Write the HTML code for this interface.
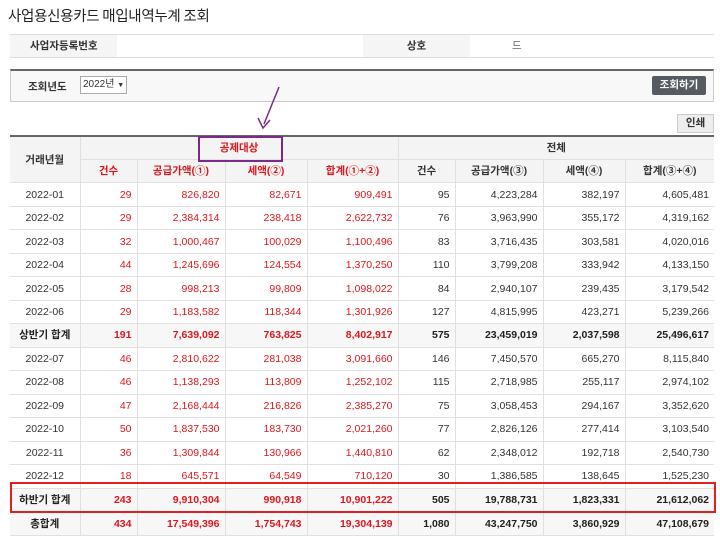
<!DOCTYPE html>
<html><head><meta charset="utf-8"><style>
*{margin:0;padding:0;box-sizing:border-box}
body{width:720px;height:543px;background:#fff;font-family:"Liberation Sans","Noto Sans CJK KR",sans-serif;font-size:10.5px;color:#333;position:relative;overflow:hidden}
.abs{position:absolute}
h1{position:absolute;left:8px;top:5px;font-size:14.5px;font-weight:normal;color:#222;font-family:"Noto Sans CJK KR",sans-serif;letter-spacing:-0.3px}
table{position:absolute;left:10px;top:135px;width:704px;border-collapse:collapse;table-layout:fixed;border-top:2px solid #666}
td,th{border:1px solid #e0e0e0;height:23.47px;line-height:12px;padding:0 5px;text-align:right;font-weight:normal;white-space:nowrap;overflow:hidden}
th{text-align:center;background:#f4f4f4;font-weight:bold;font-size:10.5px;color:#333}
td:first-child{text-align:center;border-left:none}
th:first-child{border-left:none}
tr td:last-child,tr th:last-child{border-right:none}
.r{color:#e0161c}
tr.s td{background:#f7f7f7;font-weight:bold;color:#222}
tr.s td.r{color:#e0161c}
</style></head><body>
<h1>사업용신용카드 매입내역누계 조회</h1>
<div class="abs" style="left:10px;top:34px;width:704px;height:24px;border-top:1px solid #ddd;border-bottom:1px solid #ddd"></div>
<div class="abs" style="left:10px;top:35px;width:107px;height:22px;background:#f5f5f5;font-weight:bold;font-size:10.5px;line-height:22px;padding-left:20px">사업자등록번호</div>
<div class="abs" style="left:363px;top:35px;width:107px;height:22px;background:#f5f5f5;font-weight:bold;line-height:22px;text-align:center">상호</div>
<div class="abs" style="left:477px;top:35px;line-height:22px;color:#666">&nbsp;&nbsp;&nbsp;&nbsp;&nbsp;&nbsp;&nbsp;&nbsp;&nbsp;&nbsp;&nbsp;&nbsp;드</div>
<div class="abs" style="left:10px;top:69px;width:704px;height:33px;background:#f8f8f8;border:1px solid #ccc;border-top:2px solid #666"></div>
<div class="abs" style="left:28px;top:79px;font-weight:bold">조회년도</div>
<div class="abs" style="left:80px;top:76px;width:47px;height:18px;background:#fff;border:1px solid #aaa;font-size:10px;line-height:16px;padding-left:2px;white-space:nowrap;overflow:hidden">2022년 <span style="font-size:7px">▼</span></div>
<div class="abs" style="left:652px;top:76px;width:54px;height:19px;background:#555b61;color:#fff;font-weight:bold;text-align:center;line-height:19px;border-radius:2px">조회하기</div>
<div class="abs" style="left:677px;top:114px;width:37px;height:19px;background:#eee;border:1px solid #ccc;font-weight:bold;text-align:center;line-height:17px">인쇄</div>
<table>
<colgroup><col style="width:70px"><col style="width:57px"><col style="width:88px"><col style="width:82px"><col style="width:91px"><col style="width:57px"><col style="width:88px"><col style="width:82px"><col style="width:89px"></colgroup>
<tr><th rowspan="2">거래년월</th><th colspan="4" class="r" style="color:#e0161c">공제대상</th><th colspan="4">전체</th></tr>
<tr><th class="r" style="color:#e0161c">건수</th><th style="color:#e0161c">공급가액(①)</th><th style="color:#e0161c">세액(②)</th><th style="color:#e0161c">합계(①+②)</th><th>건수</th><th>공급가액(③)</th><th>세액(④)</th><th>합계(③+④)</th></tr>
<tr><td>2022-01</td><td class="r">29</td><td class="r">826,820</td><td class="r">82,671</td><td class="r">909,491</td><td>95</td><td>4,223,284</td><td>382,197</td><td>4,605,481</td></tr>
<tr><td>2022-02</td><td class="r">29</td><td class="r">2,384,314</td><td class="r">238,418</td><td class="r">2,622,732</td><td>76</td><td>3,963,990</td><td>355,172</td><td>4,319,162</td></tr>
<tr><td>2022-03</td><td class="r">32</td><td class="r">1,000,467</td><td class="r">100,029</td><td class="r">1,100,496</td><td>83</td><td>3,716,435</td><td>303,581</td><td>4,020,016</td></tr>
<tr><td>2022-04</td><td class="r">44</td><td class="r">1,245,696</td><td class="r">124,554</td><td class="r">1,370,250</td><td>110</td><td>3,799,208</td><td>333,942</td><td>4,133,150</td></tr>
<tr><td>2022-05</td><td class="r">28</td><td class="r">998,213</td><td class="r">99,809</td><td class="r">1,098,022</td><td>84</td><td>2,940,107</td><td>239,435</td><td>3,179,542</td></tr>
<tr><td>2022-06</td><td class="r">29</td><td class="r">1,183,582</td><td class="r">118,344</td><td class="r">1,301,926</td><td>127</td><td>4,815,995</td><td>423,271</td><td>5,239,266</td></tr>
<tr class="s"><td>상반기 합계</td><td class="r">191</td><td class="r">7,639,092</td><td class="r">763,825</td><td class="r">8,402,917</td><td>575</td><td>23,459,019</td><td>2,037,598</td><td>25,496,617</td></tr>
<tr><td>2022-07</td><td class="r">46</td><td class="r">2,810,622</td><td class="r">281,038</td><td class="r">3,091,660</td><td>146</td><td>7,450,570</td><td>665,270</td><td>8,115,840</td></tr>
<tr><td>2022-08</td><td class="r">46</td><td class="r">1,138,293</td><td class="r">113,809</td><td class="r">1,252,102</td><td>115</td><td>2,718,985</td><td>255,117</td><td>2,974,102</td></tr>
<tr><td>2022-09</td><td class="r">47</td><td class="r">2,168,444</td><td class="r">216,826</td><td class="r">2,385,270</td><td>75</td><td>3,058,453</td><td>294,167</td><td>3,352,620</td></tr>
<tr><td>2022-10</td><td class="r">50</td><td class="r">1,837,530</td><td class="r">183,730</td><td class="r">2,021,260</td><td>77</td><td>2,826,126</td><td>277,414</td><td>3,103,540</td></tr>
<tr><td>2022-11</td><td class="r">36</td><td class="r">1,309,844</td><td class="r">130,966</td><td class="r">1,440,810</td><td>62</td><td>2,348,012</td><td>192,718</td><td>2,540,730</td></tr>
<tr><td>2022-12</td><td class="r">18</td><td class="r">645,571</td><td class="r">64,549</td><td class="r">710,120</td><td>30</td><td>1,386,585</td><td>138,645</td><td>1,525,230</td></tr>
<tr class="s"><td style="height:24px">하반기 합계</td><td class="r">243</td><td class="r">9,910,304</td><td class="r">990,918</td><td class="r">10,901,222</td><td>505</td><td>19,788,731</td><td>1,823,331</td><td>21,612,062</td></tr>
<tr class="s"><td style="height:23px">총합계</td><td class="r">434</td><td class="r">17,549,396</td><td class="r">1,754,743</td><td class="r">19,304,139</td><td>1,080</td><td>43,247,750</td><td>3,860,929</td><td>47,108,679</td></tr>
</table>
<div class="abs" style="left:198px;top:136px;width:85px;height:26px;border:2px solid #7b2a8c"></div>
<div class="abs" style="left:10px;top:482px;width:706px;height:31px;border:2px solid #e02020"></div>
<svg class="abs" style="left:250px;top:84px" width="40" height="50"><line x1="29" y1="3" x2="14" y2="40" stroke="#7b2a8c" stroke-width="1.5"/><path d="M8 34 L13 44 L20 36" fill="none" stroke="#7b2a8c" stroke-width="1.5"/></svg>
</body></html>
